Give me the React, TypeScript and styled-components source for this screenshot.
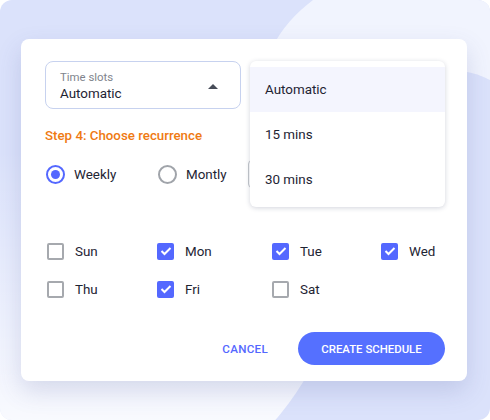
import React from "react";
import styled, { createGlobalStyle } from "styled-components";

const GlobalStyle = createGlobalStyle`
	body {
		margin: 0;
		background: #ffffff;
		font-family: Roboto, "Liberation Sans", sans-serif;
	}
`;

const Frame = styled.div`
	position: relative;
	width: 490px;
	height: 420px;
	box-sizing: border-box;
	padding: 39px 23px 39px 21px;
	border-radius: 12px;
	overflow: hidden;
	background: #dbe2fb;
	display: flex;
`;

const Backdrop = styled.svg`
	position: absolute;
	left: 0;
	top: 0;
`;

const Card = styled.div`
	position: relative;
	flex: 1;
	display: flex;
	flex-direction: column;
	box-sizing: border-box;
	padding: 22px 22px 16px 24px;
	background: #ffffff;
	border-radius: 8px;
	box-shadow: 0 10px 24px rgba(70, 84, 150, 0.18);
`;

const Select = styled.div`
	width: 196px;
	height: 48px;
	box-sizing: border-box;
	border: 1px solid #c7d2ef;
	border-radius: 8px;
	padding: 7px 14px 0 14px;
	display: flex;
	align-items: center;
	justify-content: space-between;
`;

const SelectText = styled.div`
	display: flex;
	flex-direction: column;
	margin-top: -5px;
`;

const SelectLabel = styled.span`
	font-size: 11.4px;
	line-height: 15px;
	color: #7f848d;
`;

const SelectValue = styled.span`
	font-size: 13.4px;
	line-height: 18px;
	color: #1e2433;
`;

const Caret = styled.span`
	width: 0;
	height: 0;
	margin: -4px 8px 0 0;
	border-left: 5px solid transparent;
	border-right: 5px solid transparent;
	border-bottom: 5px solid #474c58;
`;

const Menu = styled.ul`
	position: absolute;
	left: 229px;
	top: 22px;
	width: 195px;
	margin: 0;
	padding: 6px 0 5px;
	list-style: none;
	background: #ffffff;
	border-radius: 6px;
	box-shadow: 0 1px 5px rgba(30, 40, 80, 0.2);
	z-index: 2;
`;

const MenuItem = styled.li<{ $active?: boolean }>`
	height: 45px;
	padding: 0 15px;
	display: flex;
	align-items: center;
	font-size: 13.4px;
	color: #1e2433;
	background: ${p => (p.$active ? "#f4f5fe" : "transparent")};
`;

const Step = styled.div`
	margin-top: 19px;
	font-size: 13.3px;
	line-height: 16px;
	font-weight: 500;
	color: #ef7a12;
`;

const RadioRow = styled.div`
	margin-top: 18px;
	height: 24px;
	display: flex;
	align-items: center;
`;

const RadioOption = styled.label`
	display: flex;
	align-items: center;
	gap: 9px;
	width: 112px;
	font-size: 13.4px;
	color: #1e2433;
`;

const RadioCircle = styled.span<{ $on?: boolean }>`
	width: 19px;
	height: 19px;
	margin-left: 1px;
	box-sizing: border-box;
	border-radius: 50%;
	border: 2px solid ${p => (p.$on ? "#5468ff" : "#a0a4aa")};
	display: flex;
	align-items: center;
	justify-content: center;

	&::after {
		content: "";
		width: 9px;
		height: 9px;
		border-radius: 50%;
		background: ${p => (p.$on ? "#5468ff" : "transparent")};
	}
`;

const HiddenField = styled.div`
	width: 120px;
	height: 28px;
	margin-left: -21px;
	box-sizing: border-box;
	border: 1px solid #c4c7cc;
	border-radius: 4px;
`;

const Days = styled.div`
	margin-top: 53px;
	display: grid;
	grid-template-columns: 110px 115px 109px auto;
	row-gap: 14px;
`;

const Day = styled.label`
	height: 24px;
	display: flex;
	align-items: center;
	gap: 11px;
	padding-left: 2px;
	font-size: 13.4px;
	color: #1e2433;
`;

const Box = styled.span<{ $on?: boolean }>`
	width: 17px;
	height: 17px;
	box-sizing: border-box;
	border-radius: 2px;
	border: ${p => (p.$on ? "none" : "2px solid #a6a9ae")};
	background: ${p => (p.$on ? "#5468ff" : "transparent")};
	display: flex;
	align-items: center;
	justify-content: center;
`;

const Actions = styled.div`
	margin-top: auto;
	display: flex;
	justify-content: flex-end;
	align-items: center;
	gap: 22px;
`;

const TextButton = styled.button`
	border: none;
	background: none;
	padding: 8px 8px;
	font-family: inherit;
	font-size: 11.6px;
	font-weight: 500;
	letter-spacing: 0.3px;
	color: #5468ff;
`;

const PrimaryButton = styled.button`
	width: 147px;
	height: 33px;
	border: none;
	border-radius: 17px;
	background: #5570ff;
	font-family: inherit;
	font-size: 11.4px;
	font-weight: 500;
	color: #ffffff;
`;

const days = [
	{ name: "Sun", on: false },
	{ name: "Mon", on: true },
	{ name: "Tue", on: true },
	{ name: "Wed", on: true },
	{ name: "Thu", on: false },
	{ name: "Fri", on: true },
	{ name: "Sat", on: false },
];

function Check() {
	return (
		<svg width="12" height="10" viewBox="0 0 12 10">
			<polyline points="1.5,5 4.5,8 10.5,2" fill="none" stroke="#fff" strokeWidth="2" />
		</svg>
	);
}

export default function App() {
	return <>
		<GlobalStyle />
		<Frame>
			<Backdrop width="490" height="420" viewBox="0 0 490 420">
				<defs>
					<linearGradient id="fade" x1="0" y1="150" x2="0" y2="420" gradientUnits="userSpaceOnUse">
						<stop offset="0" stopColor="#ffffff" stopOpacity="0" />
						<stop offset="1" stopColor="#ffffff" stopOpacity="0.82" />
					</linearGradient>
				</defs>
				<path d="M313 0 C 295 14 282 28 272 48 L 300 76 L 467 72 C 478 74 484 77 490 80 L 490 0 Z" fill="#f1f4fe" />
				<circle cx="75" cy="245" r="266" fill="url(#fade)" />
			</Backdrop>
			<Card>
				<Select>
					<SelectText>
						<SelectLabel>Time slots</SelectLabel>
						<SelectValue>Automatic</SelectValue>
					</SelectText>
					<Caret />
				</Select>
				<Menu>
					<MenuItem $active>Automatic</MenuItem>
					<MenuItem>15 mins</MenuItem>
					<MenuItem>30 mins</MenuItem>
				</Menu>
				<Step>Step 4: Choose recurrence</Step>
				<RadioRow>
					<RadioOption><RadioCircle $on />Weekly</RadioOption>
					<RadioOption><RadioCircle />Montly</RadioOption>
					<HiddenField />
				</RadioRow>
				<Days>
					{days.map(d => (
						<Day key={d.name}>
							<Box $on={d.on}>{d.on && <Check />}</Box>
							{d.name}
						</Day>
					))}
				</Days>
				<Actions>
					<TextButton>CANCEL</TextButton>
					<PrimaryButton>CREATE SCHEDULE</PrimaryButton>
				</Actions>
			</Card>
		</Frame>
	</>;
}
